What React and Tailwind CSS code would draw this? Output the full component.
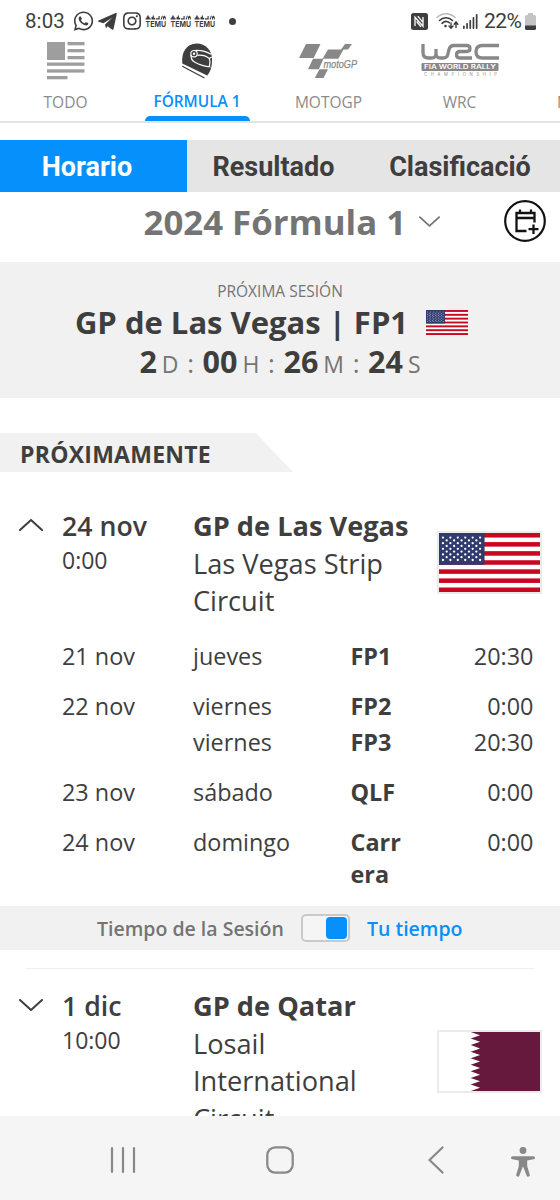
import React from "react";
import { FaWhatsapp, FaInstagram } from "react-icons/fa";

const SESSIONS = [
  { date: "21 nov", items: [["jueves", "FP1", "20:30"]] },
  { date: "22 nov", items: [["viernes", "FP2", "0:00"], ["viernes", "FP3", "20:30"]] },
  { date: "23 nov", items: [["sábado", "QLF", "0:00"]] },
  { date: "24 nov", items: [["domingo", "Carr era", "0:00"]] },
];

function Temu() {
  return (
    <svg className="h-[16px] w-[22px] overflow-visible" viewBox="0 0 22 16" fill="#3e3e3e">
      <path d="M.5 5.500V4.300h1V2.800h.8V1.500h1.400v1.300h.8v1.500h1.200v1.200zM6.500 5.500V3h1.200V1.500h1.200v2.300h1.300v1.700zM11 5.500V4.300h2.500V2h1.200v3.500zM15.500 5.500l1.400-3.700h1L16.700 5.500zM18 5.500V3l1.200-1.500L20.800 3v2.500h-1V4h-.8v1.500z" />
      <text x=".5" y="12.600" fontFamily="Inter, sans-serif" fontWeight="700" fontSize="7.600" textLength="20.500" lengthAdjust="spacingAndGlyphs">TEMU</text>
    </svg>
  );
}

function StatusBar() {
  return (
    <div className="flex h-10 flex-none items-center pr-6 pl-[25px] text-[#3e3e3e]">
      <span className="mt-0.5 w-[48px] font-[Roboto,sans-serif] text-[20.500px] leading-6 tracking-[0.1px]">8:03</span>
      <FaWhatsapp className="mt-0.5 h-[22px] w-[21px]" />
      <svg className="mt-0.5 ml-1 h-[17px] w-[19px]" viewBox="0 0 19 17" fill="#3e3e3e">
        <path d="M18.800.8 15.600 15.800c-.2.900-.8 1.100-1.600.7L9.500 13.200 8 15.500 7 11.500 14.500 4.500 5.500 10.300.5 8.800c-.6-.3-.6-.9.1-1.200L17.600.1c.9-.3 1.400 0 1.200.700z" />
      </svg>
      <FaInstagram className="mt-0.5 ml-1.5 h-[20px] w-[18px]" preserveAspectRatio="none" />
      <div className="mt-[3px] ml-[4px] flex gap-[2.500px]"><Temu /><Temu /><Temu /></div>
      <span className="mt-0.5 ml-[13px] h-[7px] w-[7px] rounded-full bg-[#3e3e3e]" />
      <svg className="mt-0.5 ml-auto h-[17px] w-[17px]" viewBox="0 0 17 17">
        <rect width="17" height="17" rx="2.500" fill="#3e3e3e" />
        <path d="M4 13V4.200L12 13.200V4M6.800 3.200 11.500 8.800M5.600 8.500 10 13.800" fill="none" stroke="#fff" strokeWidth="1.300" />
      </svg>
      <svg className="mt-0.5 ml-[8px] h-[18px] w-[23px]" viewBox="0 0 23 18" fill="none" strokeWidth="1.600" strokeLinecap="round">
        <path d="M1 5.500C6 .5 14 .5 19 5.500" stroke="#b9b9b9" />
        <path d="M3.500 8.500C7 4.800 13 4.800 16.500 8.500M6 11.300c2.400-2.300 5-2.500 7.300-.6" stroke="#3e3e3e" />
        <circle cx="9.500" cy="14" r="1.300" fill="#3e3e3e" />
        <path d="M15 11v5m-2-2 2 2.200 2-2.200M20 15.500v-5M18.200 12.300 20 10l1.800 2.300" stroke="#3e3e3e" strokeWidth="1.400" />
      </svg>
      <svg className="mt-0.5 ml-[4px] h-[15px] w-[15px]" viewBox="0 0 15 15" fill="#3e3e3e">
        <rect y="11.500" width="1.700" height="3.500" rx=".8" /><rect x="3.200" y="9" width="1.700" height="6" rx=".8" /><rect x="6.400" y="6" width="1.700" height="9" rx=".8" /><rect x="9.600" y="3" width="1.700" height="12" rx=".8" /><rect x="12.800" y="0" width="1.700" height="15" rx=".8" />
      </svg>
      <span className="mt-0.5 ml-[6px] w-[40px] font-[Roboto,sans-serif] text-[21px] leading-6 tracking-[-0.500px]">22%</span>
      <svg className="mt-0.5 ml-px h-[17px] w-[11px]" viewBox="0 0 11 17">
        <path d="M3 0h5v2h1.500Q11 2 11 3.500V13H0V3.500Q0 2 1.500 2H3z" fill="#c4c4c4" />
        <path d="M0 12.500h11v3q0 1.500-1.500 1.500h-8Q0 17 0 15.500z" fill="#3e3e3e" />
      </svg>
    </div>
  );
}

function NewsIcon() {
  return (
    <svg className="h-[38px] w-[38px]" viewBox="0 0 38 38" fill="#9e9e9e">
      <rect width="18" height="18" />
      <rect x="20.500" y="0" width="17" height="3.300" /><rect x="20.500" y="7" width="17" height="3.300" /><rect x="20.500" y="14" width="17" height="3.300" />
      <rect y="20.500" width="37.500" height="3.300" /><rect y="27.300" width="37.500" height="3.300" /><rect y="34" width="20.500" height="3.300" />
    </svg>
  );
}

function HelmetIcon() {
  return (
    <svg className="h-[38px] w-[38px]" viewBox="0 0 38 38">
      <path d="M4.300 21.500C3 10 9 1.500 18.500 1.500 28 1.500 34 9 34 17c0 7-1 12-4.800 16.500z" fill="#3e3e3e" />
      <path d="M4.300 24.200 26.500 36" fill="none" stroke="#3e3e3e" strokeWidth="1.300" />
      <g fill="none" stroke="#fff" strokeWidth="1.200">
        <circle cx="16" cy="11.700" r="3.200" /><circle cx="16" cy="11.700" r=".6" />
        <path d="M16 8.500c6-.6 12 .6 17 3.800M13 13c-.2 3.500.8 5.500 3.500 7 5 2.800 10 4.500 16 5M19.500 13.300c4.500-.4 8.500.5 11.800 3.200 1 2.500 1 5 0 8M31.300 16.500l2.500-1.500" />
      </g>
    </svg>
  );
}

function MotoGpIcon() {
  return (
    <svg className="mt-px h-[36px] w-[61px] overflow-visible" viewBox="0 0 61 36" fill="#888">
      <path d="M8 1h14.500l-6.800 14H1zM15 15.800h10.500l-4.700 10.500H10zM21.500 26.300h8.500L25.500 35h-8.700zM35 6.500h10.500l-5.200 9.300H24.500l5.500-9.300zM47 1h7l-4 5.500h-7z" />
      <text x="25.500" y="24.800" fontFamily="'Liberation Sans', sans-serif" fontStyle="italic" fontSize="11.500" stroke="#888" strokeWidth=".25" textLength="33.500" lengthAdjust="spacingAndGlyphs">motoGP</text>
    </svg>
  );
}

function WrcIcon() {
  return (
    <svg className="mt-px h-[34px] w-[78px] overflow-visible" viewBox="0 0 78 34">
      <path d="M2 1v8.500Q2 15 7.500 15h3Q15 15 15 10.500V6v4.500Q15 15 19.500 15h3Q26 15 26.800 11.500L28 6.500Q29 2.500 33 2.500h12.500q3.500 0 3.500 3t-3.500 3H39q-3.500 0-3.500 3.250T39 15h12M78 2.500H61.500q-6.500 0-6.500 6.250t6.500 6.250H78" fill="none" stroke="#888" strokeWidth="3.300" />
      <rect x=".5" y="20" width="77" height="8" rx="1.200" fill="#888" />
      <text x="3" y="26.200" fontFamily="Inter, sans-serif" fontWeight="600" fontSize="5.600" fill="#fff" textLength="72" lengthAdjust="spacingAndGlyphs">FIA WORLD RALLY</text>
      <text x="3" y="33.200" fontFamily="Inter, sans-serif" fontSize="4.200" fill="#8e8e8e" textLength="73" lengthAdjust="spacing">CHAMPIONSHIP</text>
    </svg>
  );
}

function Sport({ icon, label, active, width }) {
  return (
    <div className={`flex flex-none flex-col items-center ${width}`}>
      <div className="flex h-[51px] items-start pt-[2px]">{icon}</div>
      <span className={`h-[25px] leading-[22px] whitespace-nowrap ${active ? "text-[15.400px] font-semibold text-[#0590fb]" : "text-[15.500px] text-[#8b8b8b]"}`}>{label}</span>
      {active && <span className="h-[5px] w-[105px] rounded-t-[5px] bg-[#0590fb]" />}
    </div>
  );
}

function UsFlag({ className }) {
  const stars = [];
  for (let r = 0; r < 9; r++)
    for (let c = r % 2; c < 11; c += 2) stars.push([4 + c * 3.750, 4.600 + r * 2.800]);
  return (
    <svg className={className} viewBox="0 0 102 59" preserveAspectRatio="none">
      <rect width="102" height="59" fill="#fff" />
      {[0, 2, 4, 6, 8, 10, 12].map((i) => <rect key={i} y={i * 4.540} width="102" height="4.540" fill="#ca0720" />)}
      <rect width="46" height="31.800" fill="#303b6d" />
      {stars.map(([x, y], i) => <circle key={i} cx={x} cy={y} r="1.150" fill="#fff" />)}
    </svg>
  );
}

function QatarFlag() {
  const edge = Array.from({ length: 9 }, (_, i) => `L41.500 ${(i + 0.5) * 6.560} L32 ${(i + 1) * 6.560}`).join(" ");
  return (
    <svg className="h-[59px] w-[101px]" viewBox="0 0 102 59" preserveAspectRatio="none">
      <rect width="102" height="59" fill="#fff" />
      <path d={`M32 0 ${edge} H102 V0Z`} fill="#67183d" />
    </svg>
  );
}

function Chevron({ up, className }) {
  return (
    <svg className={className} viewBox="0 0 24 12" fill="none" stroke="currentColor" strokeWidth="2" strokeLinecap="round" strokeLinejoin="round">
      <path d={up ? "M1 11 12 1l11 10" : "M1 1l11 10L23 1"} />
    </svg>
  );
}

function EventHead({ up, date, time, name, lines, flag }) {
  return (
    <div className="grid grid-cols-[62px_131px_244px_123px]">
      <Chevron up={up} className="mt-[11px] h-[12px] w-[24px] justify-self-center text-[#3e3e3e]" />
      <div>
        <div className="text-[26.700px] leading-[36px] font-semibold">{date}</div>
        <div className="text-[23px] leading-[32px]">{time}</div>
      </div>
      <div className="text-[27.200px] leading-[37.500px] whitespace-nowrap">
        <div className="-mt-px font-bold">{name}</div>
        {lines.map((l) => <div key={l}>{l}</div>)}
      </div>
      <div className={`h-[63px] w-[105px] border-2 border-[#ebebeb] ${up ? "mt-[23px]" : "mt-[42px]"}`}>{flag}</div>
    </div>
  );
}

function Count({ n, unit, last }) {
  return (
    <>
      <span className="text-[30.500px] font-bold text-[#3e3e3e]">{n}</span>
      <span className="ml-[5px] text-[23px]">{unit}</span>
      {!last && <span className="mx-[8.600px] text-[26px]">:</span>}
    </>
  );
}

export default function App() {
  return (
    <div className="flex h-[1200px] w-[560px] flex-col overflow-hidden bg-white font-['Open_Sans','Noto_Sans',sans-serif] text-[#3e3e3e]">
      <StatusBar />
      <div className="flex h-[83px] flex-none overflow-hidden border-b-2 border-[#e2e2e2]">
        <Sport icon={<NewsIcon />} label="TODO" width="w-[131px]" />
        <Sport icon={<HelmetIcon />} label="FÓRMULA 1" active width="w-[132px]" />
        <Sport icon={<MotoGpIcon />} label="MOTOGP" width="w-[131px]" />
        <Sport icon={<WrcIcon />} label="WRC" width="w-[131px]" />
        <div className="ml-[32px] pt-[51px] text-[15.500px] leading-[22px] text-[#8b8b8b]">N</div>
      </div>
      <div className="mt-[17px] flex h-[52px] flex-none bg-[#e5e5e5] font-[Roboto,sans-serif] text-[27px] leading-[54px] font-bold">
        <div className="h-[52px] w-[187px] bg-[#0590fb] pr-[13px] text-center text-white">Horario</div>
        <div className="w-[173px] text-center">Resultado</div>
        <div className="w-[200px] text-center">Clasificació</div>
      </div>
      <div className="flex h-[70px] flex-none items-start pl-[143.500px] text-[#747474]">
        <span className="mt-[7px] w-[275px] text-[34.800px] leading-[45px] font-bold whitespace-nowrap">2024 Fórmula 1</span>
        <Chevron className="mt-[24px] h-[11px] w-[21px]" />
        <svg className="mt-[8px] ml-[64px] h-[42px] w-[42px]" viewBox="0 0 42 42" fill="none" stroke="#111" strokeWidth="2.200">
          <circle cx="21" cy="21" r="19.800" />
          <path d="M22.500 31H12.500V13H30.500V22.500M12.500 18H30.500M16 9.500V13.500M27 9.500V13.500M29.500 24.500V34M24.500 29.200H34.500" strokeWidth="2.300" />
        </svg>
      </div>
      <div className="flex h-[136px] flex-none flex-col items-center bg-[#f1f1f1] pt-[18px]">
        <div className="text-[15.500px] leading-[22px] text-[#747474]">PRÓXIMA SESIÓN</div>
        <div className="flex h-[40px] items-center pr-[17px]">
          <span className="text-[31px] leading-[40px] font-bold whitespace-nowrap">GP de Las Vegas | FP1</span>
          <UsFlag className="ml-[18px] h-[25px] w-[42px]" />
        </div>
        <div className="flex items-baseline leading-[38px] text-[#747474]">
          <Count n="2" unit="D" /><Count n="00" unit="H" /><Count n="26" unit="M" /><Count n="24" unit="S" last />
        </div>
      </div>
      <div className="mt-[35px] h-[39px] w-[293px] flex-none bg-[#f1f1f1] pt-[2px] pl-[20px] text-[23px] leading-[39px] font-bold tracking-[0.250px] [clip-path:polygon(0_0,256px_0,100%_100%,0_100%)]">PRÓXIMAMENTE</div>
      <div className="mt-[36px] h-[132px] flex-none">
        <EventHead up date="24 nov" time="0:00" name="GP de Las Vegas" lines={["Las Vegas Strip", "Circuit"]} flag={<UsFlag className="h-[59px] w-[101px]" />} />
      </div>
      <div className="flex h-[266px] flex-none flex-col gap-[13.900px] pl-[62px] text-[23.400px] leading-[32px]">
        {SESSIONS.map((s) => (
          <div key={s.date} className="flex">
            <div className="w-[131px]">{s.date}</div>
            <div className="flex flex-col">
              {s.items.map(([day, code, time]) => (
                <div key={code} className="mb-[4px] flex">
                  <div className="w-[157.500px]">{day}</div>
                  <div className="w-[52px] font-bold">{code}</div>
                  <div className="w-[131px] text-right">{time}</div>
                </div>
              ))}
            </div>
          </div>
        ))}
      </div>
      <div className="flex h-[44px] flex-none items-center bg-[#f1f1f1] pl-[97px] text-[19.500px] font-semibold text-[#747474]">
        <span className="w-[204px] pt-px whitespace-nowrap">Tiempo de la Sesión</span>
        <span className="flex h-[28px] w-[49px] items-center justify-end rounded-[5px] border-2 border-[#c9c9c9] bg-[#f5f5f5] pr-px"><span className="h-[22px] w-[21px] rounded-[4px] bg-[#0590fb]" /></span>
        <span className="ml-[17px] pt-px whitespace-nowrap text-[#0590fb]">Tu tiempo</span>
      </div>
      <div className="mx-[26px] mt-[18px] h-px flex-none bg-[#efefef]" />
      <div className="mt-[19px] h-[128px] flex-none overflow-hidden">
        <EventHead date="1 dic" time="10:00" name="GP de Qatar" lines={["Losail", "International", "Circuit"]} flag={<QatarFlag />} />
      </div>
      <div className="flex h-[84px] flex-none items-center bg-[#f5f5f5] pt-[4px] pl-[110px] text-[#888]">
        <svg className="h-[28px] w-[26px]" viewBox="0 0 26 28" stroke="#888" strokeWidth="2.200" strokeLinecap="round"><path d="M2 2v24M13 2v24M24 2v24" /></svg>
        <svg className="ml-[129.500px] h-[28px] w-[28px]" viewBox="0 0 28 28" fill="none" stroke="#888" strokeWidth="2.200"><rect x="1.300" y="1.300" width="25.400" height="25.400" rx="8" /></svg>
        <svg className="ml-[134.500px] h-[28px] w-[16px]" viewBox="0 0 16 28" fill="none" stroke="#888" strokeWidth="2.200" strokeLinecap="round"><path d="M14.500 1.500 1.500 14l13 12.500" /></svg>
        <svg className="mt-[4px] ml-[67px] h-[30px] w-[24px]" viewBox="0 0 24 30" fill="#888"><circle cx="12" cy="3.500" r="3.400" /><path d="M1.500 9.300h21a1.500 1.500 0 0 1 0 3L16.200 13.500v5.500l2.500 8.500a1.600 1.600 0 0 1-3.100 1L12.300 20h-.6L8.400 28.500a1.600 1.600 0 0 1-3.100-1L7.800 19v-5.500L1.500 12.300a1.500 1.500 0 0 1 0-3z" /></svg>
      </div>
    </div>
  );
}
